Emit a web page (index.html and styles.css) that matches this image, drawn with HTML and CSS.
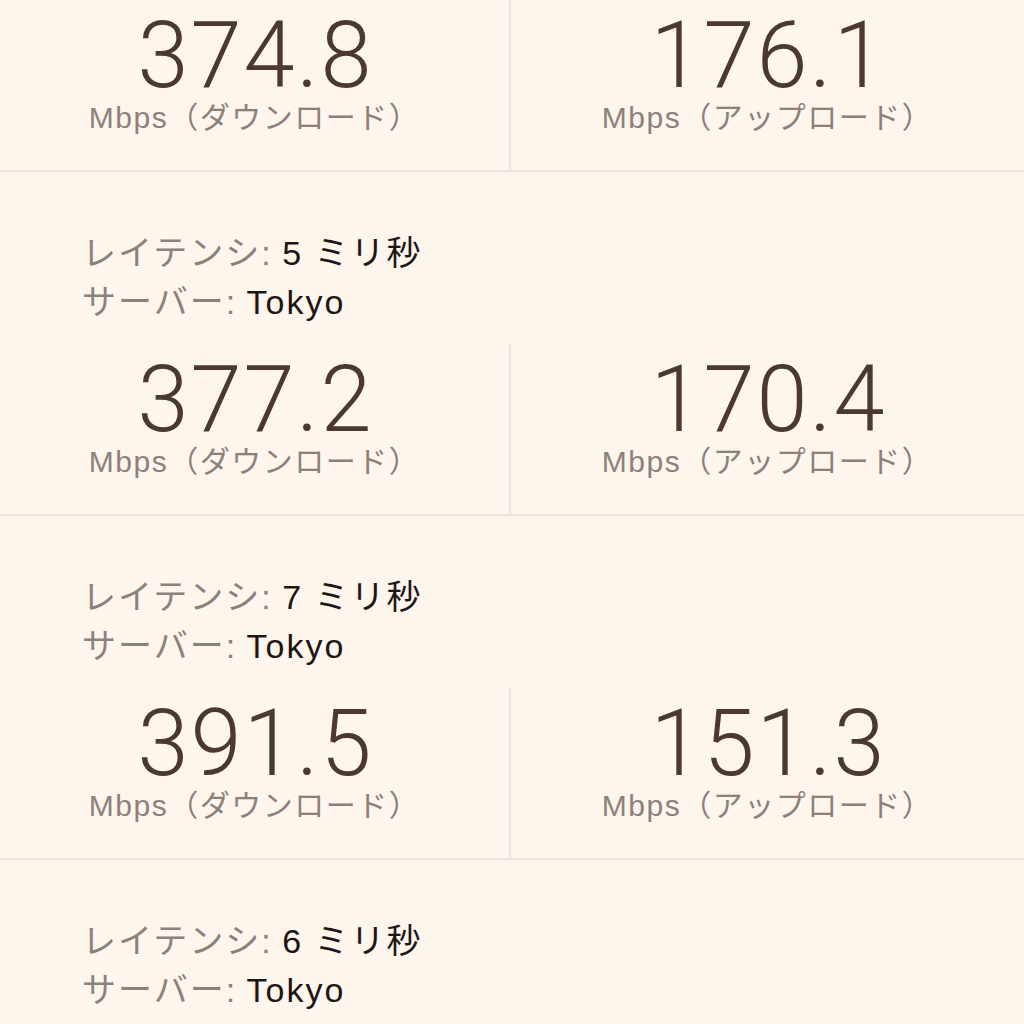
FILE: index.html
```html
<!DOCTYPE html>
<html lang="ja">
<head>
  <meta charset="UTF-8" />
  <title>速度テスト結果</title>
  <link rel="stylesheet" href="styles.css">
</head>
<body>
  <div class="result">
    <div class="speeds">
      <div class="speed down">
        <div class="value">374.8</div>
        <div class="unit">Mbps（ダウンロード）</div>
      </div>
      <div class="speed">
        <div class="value">176.1</div>
        <div class="unit">Mbps（アップロード）</div>
      </div>
    </div>
    <div class="info">
      <div class="row"><span class="label">レイテンシ:</span> <span class="val">5 ミリ秒</span></div>
      <div class="row"><span class="label">サーバー:</span> <span class="val">Tokyo</span></div>
    </div>
  </div>

  <div class="result">
    <div class="speeds">
      <div class="speed down">
        <div class="value">377.2</div>
        <div class="unit">Mbps（ダウンロード）</div>
      </div>
      <div class="speed">
        <div class="value">170.4</div>
        <div class="unit">Mbps（アップロード）</div>
      </div>
    </div>
    <div class="info">
      <div class="row"><span class="label">レイテンシ:</span> <span class="val">7 ミリ秒</span></div>
      <div class="row"><span class="label">サーバー:</span> <span class="val">Tokyo</span></div>
    </div>
  </div>

  <div class="result">
    <div class="speeds">
      <div class="speed down">
        <div class="value">391.5</div>
        <div class="unit">Mbps（ダウンロード）</div>
      </div>
      <div class="speed">
        <div class="value">151.3</div>
        <div class="unit">Mbps（アップロード）</div>
      </div>
    </div>
    <div class="info">
      <div class="row"><span class="label">レイテンシ:</span> <span class="val">6 ミリ秒</span></div>
      <div class="row"><span class="label">サーバー:</span> <span class="val">Tokyo</span></div>
    </div>
  </div>
</body>
</html>
```

FILE: styles.css
```css
html, body {
  margin: 0;
  padding: 0;
  background: #fef6ec;
  font-family: 'Liberation Sans', 'Noto Sans CJK JP', sans-serif;
  overflow: hidden;
}
.speeds {
  display: flex;
  height: 170px;
  border-bottom: 2px solid #ece4dc;
}
.speed {
  flex: 1;
  text-align: center;
  padding-top: 11px;
  box-sizing: border-box;
}
.speed.down {
  flex: 0 0 511px;
  border-right: 2px solid #ece4dc;
}
.value {
  font-family: Roboto, 'Liberation Sans', sans-serif;
  font-weight: 300;
  font-size: 92px;
  line-height: 90px;
  letter-spacing: 2px;
  padding-left: 2px;
  color: #4b3832;
}
.unit {
  font-size: 30px;
  line-height: 34px;
  letter-spacing: 1.5px;
  color: #8c807b;
}
.info {
  height: 172px;
  box-sizing: border-box;
  padding: 57px 0 0 82px;
  font-size: 34px;
  line-height: 49px;
}
.label {
  color: #8c817d;
  letter-spacing: 2px;
}
.val {
  color: #1e1515;
  letter-spacing: 2px;
}
```
